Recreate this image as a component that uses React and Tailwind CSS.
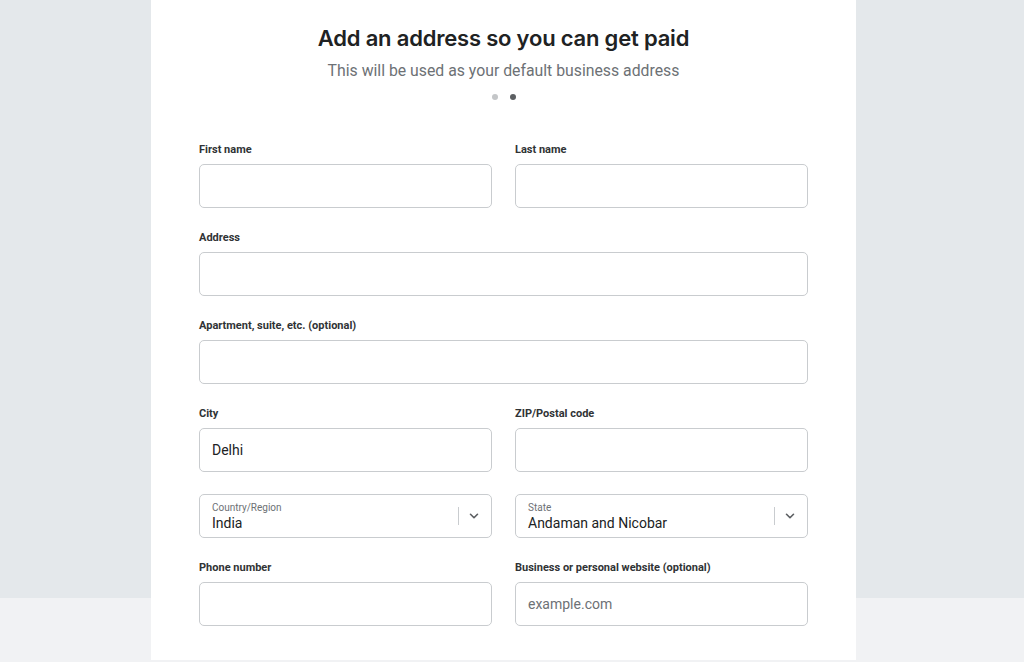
import { ChevronDown } from 'lucide-react';

function Field({ label, value, placeholder, className = '' }) {
  return (
    <div className={`flex flex-col ${className}`}>
      <label className="text-[11px] leading-4 font-bold text-[#303335] mb-1.5 mt-px">
        {label}
      </label>
      <div className="h-[44px] rounded-[5px] border border-[#c9cccf] bg-white flex items-center px-3">
        {value ? (
          <span className="text-[14px] text-[#202223]">{value}</span>
        ) : placeholder ? (
          <span className="text-[14px] text-[#6d7175]">{placeholder}</span>
        ) : null}
      </div>
    </div>
  );
}

function SelectBox({ label, value }) {
  return (
    <div className="h-[44px] rounded-[5px] border border-[#c9cccf] bg-white flex items-center pl-3 pr-[10px]">
      <div className="flex-1 flex flex-col pt-[2px]">
        <span className="text-[10px] text-[#6d7175] leading-[12px]">{label}</span>
        <span className="text-[14px] text-[#202223] leading-[18px]">{value}</span>
      </div>
      <div className="w-px h-[18px] bg-[#c9cccf] mr-[8px]" />
      <ChevronDown className="w-3.5 h-3.5 text-[#5c5f62]" strokeWidth={2.75} />
    </div>
  );
}

export default function App() {
  return (
    <div className="min-h-[662px] w-full bg-[linear-gradient(to_bottom,#e4e8eb_0,#e4e8eb_598px,#f1f2f4_598px)] font-['Roboto',sans-serif]">
      <div className="w-[705px] ml-[151px] bg-white h-[660px] px-12 pt-[24px]">
        <div className="flex flex-col items-center">
          <h1 className="text-[22px] leading-[28px] font-semibold text-[#202223] tracking-[-0.2px] font-['Inter',sans-serif]">
            Add an address so you can get paid
          </h1>
          <p className="mt-[7px] text-[15.8px] leading-6 text-[#6d7175]">
            This will be used as your default business address
          </p>
          <div className="flex gap-3 mt-[11px]">
            <span className="w-1.5 h-1.5 rounded-full bg-[#c4c6c8]" />
            <span className="w-1.5 h-1.5 rounded-full bg-[#5c5f62]" />
          </div>
        </div>

        <div className="mt-[41px] flex flex-col gap-[21px]">
          <div className="grid grid-cols-2 gap-x-[23px]">
            <Field label="First name" />
            <Field label="Last name" />
          </div>
          <Field label="Address" />
          <Field label="Apartment, suite, etc. (optional)" />
          <div className="grid grid-cols-2 gap-x-[23px]">
            <Field label="City" value="Delhi" />
            <Field label="ZIP/Postal code" />
          </div>
          <div className="grid grid-cols-2 gap-x-[23px] mt-[1px]">
            <SelectBox label="Country/Region" value="India" />
            <SelectBox label="State" value="Andaman and Nicobar" />
          </div>
          <div className="grid grid-cols-2 gap-x-[23px]">
            <Field label="Phone number" />
            <Field label="Business or personal website (optional)" placeholder="example.com" />
          </div>
        </div>
      </div>
    </div>
  );
}
